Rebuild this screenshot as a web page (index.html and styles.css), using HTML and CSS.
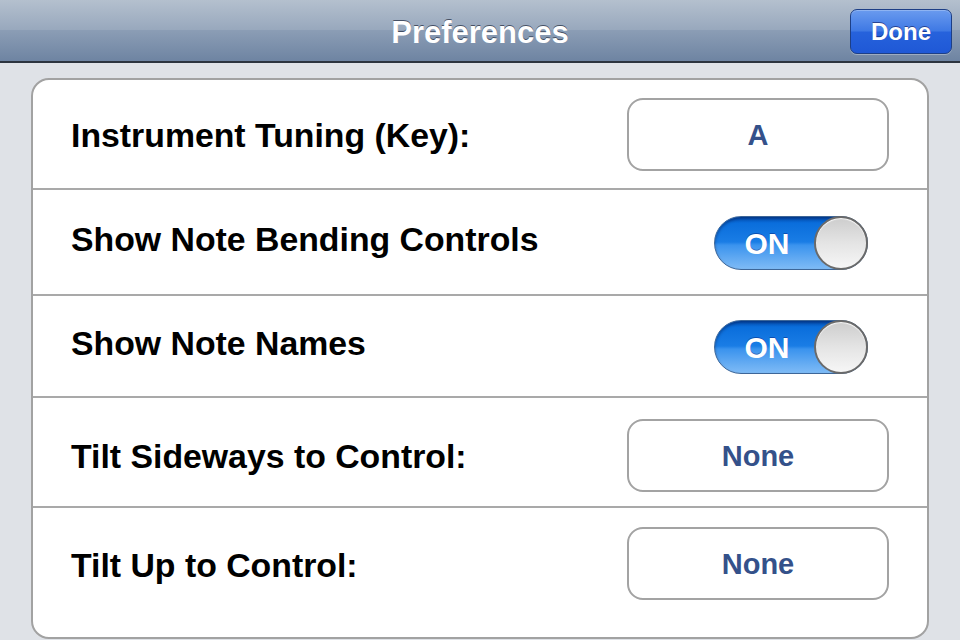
FILE: index.html
```html
<!DOCTYPE html>
<html>
<head>
<meta charset="utf-8">
<link rel="stylesheet" href="styles.css">
</head>
<body>
<div class="navbar">
  <div class="nav-side"></div>
  <div class="nav-title">Preferences</div>
  <div class="nav-side nav-right"><button class="done-btn">Done</button></div>
</div>
<div class="card">
  <div class="row row-1">
    <div class="label">Instrument Tuning (Key):</div>
    <div class="picker">A</div>
  </div>
  <div class="row row-2">
    <div class="label label-up">Show Note Bending Controls</div>
    <div class="switch"><span class="switch-on">ON</span><span class="knob"></span></div>
  </div>
  <div class="row row-3">
    <div class="label label-up">Show Note Names</div>
    <div class="switch"><span class="switch-on">ON</span><span class="knob"></span></div>
  </div>
  <div class="row row-4">
    <div class="label">Tilt Sideways to Control:</div>
    <div class="picker">None</div>
  </div>
  <div class="row row-5">
    <div class="label">Tilt Up to Control:</div>
    <div class="picker">None</div>
  </div>
</div>
</body>
</html>
```

FILE: styles.css
```css
html, body {
  margin: 0;
  padding: 0;
}
body {
  width: 960px;
  height: 640px;
  overflow: hidden;
  background: #dfe2e7;
  font-family: "Liberation Sans", Arial, Helvetica, sans-serif;
}
.navbar {
  height: 61px;
  border-bottom: 2px solid #2c343f;
  background: linear-gradient(to bottom, #b4c0ce 0%, #98a8bd 49%, #8b9db5 50%, #6e84a2 100%);
  display: grid;
  grid-template-columns: 1fr auto 1fr;
  align-items: center;
}
.nav-title {
  color: #fff;
  font-weight: bold;
  font-size: 31px;
  text-shadow: 0 -1px 0 rgba(40, 50, 70, 0.75);
  padding-top: 4px;
}
.nav-right {
  display: flex;
  justify-content: flex-end;
  padding-right: 8px;
  padding-top: 1px;
}
.done-btn {
  width: 102px;
  height: 45px;
  border: 1px solid #1d3f86;
  border-radius: 7px;
  background: linear-gradient(to bottom, #6a9bef 0%, #3f79e4 48%, #2662dc 52%, #1f58d6 100%);
  box-shadow: inset 0 1px 0 rgba(255,255,255,0.25), 0 1px 0 rgba(255,255,255,0.3);
  color: #fff;
  font-family: "Liberation Sans", Arial, sans-serif;
  font-weight: bold;
  font-size: 24px;
  text-shadow: 0 -1px 0 rgba(0, 0, 60, 0.5);
  padding: 1px 0 0 0;
}
.card {
  margin: 15px 31px 0 31px;
  height: 561px;
  box-sizing: border-box;
  border: 2px solid #a2a2a2;
  border-radius: 18px;
  background: #fff;
  overflow: hidden;
}
.row {
  box-sizing: border-box;
  display: flex;
  align-items: center;
  justify-content: space-between;
  padding: 0 38px 0 38px;
  border-bottom: 2px solid #a9a9a9;
}
.row-1 { height: 110px; }
.row-2 { height: 106px; padding-right: 59px; }
.row-3 { height: 102px; padding-right: 59px; }
.row-4 { height: 110px; padding-top: 6px; }
.row-5 {
  height: 129px;
  border-bottom: none;
  align-items: flex-start;
  padding-top: 19px;
}
.row-5 .label { margin-top: 19px; }
.label {
  color: #000;
  font-weight: bold;
  font-size: 33.8px;
  margin-top: 3px;
}
.label-up { margin-top: -5px; }
.picker {
  box-sizing: border-box;
  width: 262px;
  height: 73px;
  border: 2px solid #a3a3a3;
  border-radius: 16px;
  display: flex;
  align-items: center;
  justify-content: center;
  color: #34518a;
  font-weight: bold;
  font-size: 29px;
  padding-top: 2px;
}
.switch {
  position: relative;
  box-sizing: border-box;
  width: 154px;
  height: 54px;
  border-radius: 27px;
  border: 1px solid #3d6698;
  background: linear-gradient(to bottom, #0452b8 0%, #0a6edc 12%, #1a7de5 48%, #3a93ee 54%, #62aaf2 80%, #7ebbf6 100%);
  box-shadow: inset 0 2px 3px rgba(0,0,40,0.35);
  display: flex;
  align-items: center;
  margin-top: 2px;
}
.switch-on {
  width: 104px;
  text-align: center;
  color: #fff;
  font-weight: bold;
  font-size: 30px;
  padding-top: 2px;
  text-shadow: 0 -1px 0 rgba(0,0,80,0.35);
}
.knob {
  position: absolute;
  right: -1px;
  top: -1px;
  box-sizing: border-box;
  width: 54px;
  height: 54px;
  border-radius: 50%;
  border: 2px solid #6a6a6a;
  background: linear-gradient(to bottom, #cdcdcd 0%, #e4e4e4 50%, #f6f6f6 100%);
  box-shadow: inset 0 1px 1px rgba(255,255,255,0.9);
}
```
